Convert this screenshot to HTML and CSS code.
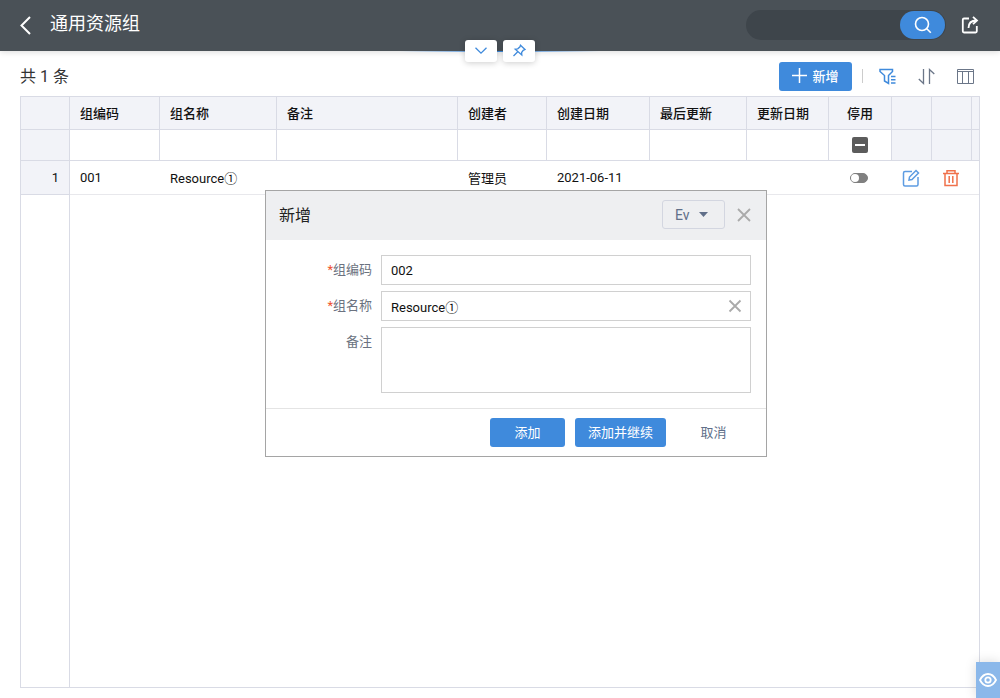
FILE: index.html
```
<!DOCTYPE html>
<html lang="zh-CN">
<head>
    <meta charset="UTF-8">
    <meta name="viewport" content="width=device-width, initial-scale=1.0">
    <title>通用资源组</title>
    <link rel="stylesheet" href="styles.css">
</head>
<body>
    <header class="topbar">
        <button class="icon-button back" aria-label="返回">
            <svg width="12" height="20" viewBox="0 0 12 20"><path d="M11 2L2.500 10.500 11 19" fill="none" stroke="#fff" stroke-width="2"/></svg>
        </button>
        <h1>通用资源组</h1>
        <form class="search">
            <input type="text" aria-label="搜索">
            <button type="button" aria-label="搜索">
                <svg width="18" height="18" viewBox="0 0 18 18" fill="none" stroke="#fff" stroke-width="1.6"><circle cx="8" cy="8" r="6.5"/><path d="M12.8 12.8l4 4"/></svg>
            </button>
        </form>
        <button class="icon-button share" aria-label="分享">
            <svg width="18" height="18" viewBox="0 0 18 18" fill="none" stroke="#fff" stroke-width="1.8"><path d="M8 2.500H3q-1.200 0-1.200 1.200v11.600q0 1.200 1.200 1.200h11.600q1.200 0 1.200-1.200V10"/><path d="M7.500 12c0-5 3-7.500 8-7.500M12 .8l4 3.700-4 3.700"/></svg>
        </button>
        <div class="tabs">
            <button aria-label="展开">
                <svg width="14" height="14" viewBox="0 0 14 14"><path d="M1.500 3.700L7 9.200l5.500-5.500" fill="none" stroke="#3f8adc" stroke-width="1.300"/></svg>
            </button>
            <button aria-label="固定">
                <svg width="14" height="14" viewBox="0 0 14 14" fill="none" stroke="#3f8adc" stroke-width="1.300"><path d="M8.500 1.200l4.500 4.300-1.800.8-1.600 2.200.2 2.500L3.200 5.200l2.500-.4L8 2.800zM5.500 8L1.500 12"/></svg>
            </button>
        </div>
    </header>

    <main class="page">
        <div class="toolbar">
            <span class="count">共 1 条</span>
            <button class="button add">
                <svg width="15" height="15" viewBox="0 0 15 15"><path d="M7.500 0v15M0 7.500h15" stroke="#fff" stroke-width="1.500"/></svg>
                新增
            </button>
            <span class="divider"></span>
            <button class="icon-button" aria-label="筛选">
                <svg width="17" height="17" viewBox="0 0 17 17" fill="none" stroke="#3f8adc" stroke-width="1.500"><path d="M1 1.500h12.500v2L9.500 7.500v8l-4-2.500V7.500L1 3.500z"/><path d="M12 8.500h4.500M12 11.700h4.500M12 15h4.500"/></svg>
            </button>
            <button class="icon-button" aria-label="排序">
                <svg width="17" height="17" viewBox="0 0 17 17" fill="none" stroke="#6b7688" stroke-width="1.300"><path d="M5.500 1v14.500L.8 11M11.500 16V1.500L16.300 6"/></svg>
            </button>
            <button class="icon-button" aria-label="列设置">
                <svg width="17" height="17" viewBox="0 0 17 17" fill="none" stroke="#6b7688"><path d="M.5 1.500h16v14H.5zM.5 3.500h16M5.500 3.500v12M11.500 3.500v12"/></svg>
            </button>
        </div>

        <div class="grid">
            <table>
                <colgroup>
                    <col class="c-index"><col class="c-code"><col class="c-name"><col>
                    <col class="c-creator"><col class="c-created"><col class="c-updater"><col class="c-updated">
                    <col class="c-disabled"><col class="c-action"><col class="c-action"><col class="c-scroll">
                </colgroup>
                <thead>
                    <tr class="titles">
                        <th></th>
                        <th>组编码</th>
                        <th>组名称</th>
                        <th>备注</th>
                        <th>创建者</th>
                        <th>创建日期</th>
                        <th>最后更新</th>
                        <th>更新日期</th>
                        <th class="center">停用</th>
                        <th></th>
                        <th></th>
                        <th></th>
                    </tr>
                    <tr class="filters">
                        <td class="shade"></td>
                        <td></td>
                        <td></td>
                        <td></td>
                        <td></td>
                        <td></td>
                        <td></td>
                        <td></td>
                        <td class="center"><input type="checkbox" class="tri-state" aria-label="停用筛选"></td>
                        <td class="shade"></td>
                        <td class="shade"></td>
                        <td class="shade"></td>
                    </tr>
                </thead>
                <tbody>
                    <tr>
                        <td class="shade index">1</td>
                        <td>001</td>
                        <td>Resource①</td>
                        <td></td>
                        <td>管理员</td>
                        <td>2021-06-11</td>
                        <td></td>
                        <td></td>
                        <td class="center"><input type="checkbox" class="switch" aria-label="停用"></td>
                        <td class="center">
                            <button class="icon-button" aria-label="编辑">
                                <svg width="18" height="18" viewBox="0 0 18 18" fill="none" stroke="#5d9ce2" stroke-width="1.500"><path d="M10 2.500H3q-1.500 0-1.500 1.500v11.500q0 1.500 1.500 1.500h11.500q1.500 0 1.500-1.500V8"/><path d="M7 11l.5-3L14 1.500l2.500 2.500L10 10.500z"/></svg>
                            </button>
                        </td>
                        <td class="center">
                            <button class="icon-button" aria-label="删除">
                                <svg width="18" height="18" viewBox="0 0 18 18" fill="none" stroke="#f0714b" stroke-width="1.500"><path d="M1 4.500h16M5 4.500V1.700h8v2.800M3 4.500v12h12v-12M7.200 7v7M10.800 7v7"/></svg>
                            </button>
                        </td>
                        <td></td>
                    </tr>
                </tbody>
            </table>
            <div class="grid-rest"></div>
        </div>
    </main>

    <form class="dialog" role="dialog" aria-labelledby="dialog-title">
        <div class="dialog-header">
            <h2 id="dialog-title">新增</h2>
            <div class="select">
                <select aria-label="Ev"><option>Ev</option></select>
                <svg width="9" height="5" viewBox="0 0 9 5"><path d="M0 0h9L4.500 5z" fill="#606f89"/></svg>
            </div>
            <button type="button" class="icon-button" aria-label="关闭">
                <svg width="14" height="14" viewBox="0 0 14 14"><path d="M1 1l12 12M13 1L1 13" stroke="#aaa" stroke-width="1.800"/></svg>
            </button>
        </div>
        <div class="dialog-body">
            <label for="code"><span class="required">*</span>组编码</label>
            <div class="field"><input type="text" id="code" value="002"></div>
            <label for="name"><span class="required">*</span>组名称</label>
            <div class="field">
                <input type="text" id="name" value="Resource①">
                <button type="button" class="icon-button" aria-label="清除">
                    <svg width="14" height="14" viewBox="0 0 14 14"><path d="M1.500 1.500l11 11M12.500 1.500l-11 11" stroke="#aaa" stroke-width="1.800"/></svg>
                </button>
            </div>
            <label for="remark">备注</label>
            <div class="field"><textarea id="remark"></textarea></div>
        </div>
        <div class="dialog-footer">
            <button type="button" class="button">添加</button>
            <button type="button" class="button wide">添加并继续</button>
            <button type="button" class="button plain">取消</button>
        </div>
    </form>

    <button class="watch" aria-label="查看">
        <svg width="18" height="14" viewBox="0 0 18 14" fill="none" stroke="#fff" stroke-width="1.800"><path d="M1 7q3-6 8-6t8 6q-3 6-8 6T1 7z"/><circle cx="9" cy="7" r="2.700"/></svg>
    </button>

    <script>
        document.querySelector('.tri-state').indeterminate = true;
    </script>
</body>
</html>
```
FILE: styles.css
```
* {
    box-sizing: border-box;
}
body {
    margin: 0;
    height: 100vh;
    display: flex;
    flex-direction: column;
    background: #fff;
    color: #111;
    font-family: Roboto, "Noto Sans CJK SC", sans-serif;
    font-size: 13px;
}
h1, h2 {
    margin: 0;
    font-weight: 400;
}
button, input, select, textarea {
    margin: 0;
    padding: 0;
    border: none;
    background: none;
    font: inherit;
    color: inherit;
}
button {
    cursor: pointer;
}
svg {
    display: block;
    flex: none;
}
.icon-button {
    display: inline-block;
    vertical-align: middle;
}

/* top bar */
.topbar {
    position: relative;
    display: flex;
    align-items: center;
    height: 51px;
    padding: 0 21px 1px 19px;
    background: #4a5157;
    box-shadow: 0 1px 6px rgba(0, 0, 0, 0.15);
}
.topbar::after {
    content: "";
    position: absolute;
    left: 40%;
    right: 40%;
    top: 100%;
    height: 1px;
    background: linear-gradient(to right, transparent, #3f8adc, transparent);
}
.topbar h1 {
    margin-left: 19px;
    padding-bottom: 2px;
    color: #fff;
    font-size: 18px;
    line-height: 24px;
}
.search {
    display: flex;
    width: 200px;
    height: 30px;
    margin-left: auto;
    padding: 1px;
    border-radius: 15px;
    background: #3e454b;
}
.search input {
    flex: 1;
    min-width: 0;
    padding-left: 14px;
    color: #fff;
    outline: none;
}
.search button {
    display: flex;
    align-items: center;
    justify-content: center;
    width: 45px;
    border-radius: 14px;
    background: #3f8adc;
}
.share {
    margin-left: 15px;
}
.tabs {
    position: absolute;
    left: 50%;
    bottom: -11px;
    z-index: 1;
    display: flex;
    gap: 6px;
    transform: translateX(-50%);
}
.tabs button {
    display: flex;
    align-items: center;
    justify-content: center;
    width: 32px;
    height: 22px;
    border-radius: 3px;
    background: #fff;
    box-shadow: 0 1px 6px rgba(0, 0, 0, 0.2);
}

/* list page */
.page {
    flex: 1;
    display: flex;
    flex-direction: column;
    padding: 0 20px 10px;
}
.toolbar {
    display: flex;
    align-items: center;
    height: 45px;
    padding: 5px 6px 0 0;
}
.toolbar .icon-button {
    margin-left: 22px;
}
.toolbar .divider + .icon-button {
    margin-left: 16px;
}
.count {
    margin-right: auto;
    padding-bottom: 3px;
    color: #333;
    font-size: 16px;
}
.divider {
    width: 1px;
    height: 14px;
    margin-left: 10px;
    background: #ccc;
}
.button {
    display: flex;
    align-items: center;
    justify-content: center;
    min-width: 75px;
    height: 29px;
    padding-bottom: 2px;
    border-radius: 3px;
    background: #3f8adc;
    color: #fff;
}
.add {
    gap: 5px;
    min-width: 73px;
    font-weight: 500;
}

.grid {
    flex: 1;
    display: flex;
    flex-direction: column;
    border: 1px solid #d9dbe5;
}
table {
    width: 100%;
    table-layout: fixed;
    border-collapse: separate;
    border-spacing: 0;
}
.c-index { width: 49px; }
.c-code { width: 90px; }
.c-name { width: 117px; }
.c-creator { width: 89px; }
.c-created { width: 103px; }
.c-updater { width: 97px; }
.c-updated { width: 82px; }
.c-disabled { width: 63px; }
.c-action { width: 40px; }
.c-scroll { width: 7px; }
th, td {
    height: 34px;
    padding: 0 0 0 10px;
    border-bottom: 1px solid #e8e8ec;
    text-align: left;
    white-space: nowrap;
}
thead th, thead td, .shade {
    border-right: 1px solid #d9dbe5;
    border-bottom-color: #d9dbe5;
}
thead tr > :last-child {
    border-right: none;
}
th, .shade {
    background: #f2f3f8;
}
th {
    font-weight: 500;
}
td:last-child, th:last-child, .center {
    padding: 0;
}
.titles th {
    height: 33px;
    padding-bottom: 2px;
}
.filters td {
    height: 31px;
}
.center {
    text-align: center;
}
tbody .center {
    padding-right: 3px;
}
.index {
    padding: 0 10px 0 0;
    text-align: right;
}
.grid-rest {
    flex: 1;
    width: 49px;
    border-right: 1px solid #d9dbe5;
}
.tri-state, .switch {
    appearance: none;
    display: block;
    margin: 0 auto;
}
.tri-state {
    width: 16px;
    height: 16px;
    border-radius: 2px;
    background: #5c5c5c;
}
.tri-state:indeterminate {
    background: linear-gradient(#fff, #fff) center / 10px 2px no-repeat #5c5c5c;
}
.switch {
    width: 18px;
    height: 10px;
    border: 1px solid #808080;
    border-radius: 5px;
    background: #808080;
}
.switch::before {
    content: "";
    display: block;
    width: 8px;
    height: 8px;
    border-radius: 50%;
    background: #fff;
}

/* dialog */
.dialog {
    position: absolute;
    left: 265px;
    top: 190px;
    width: 502px;
    border: 1px solid #a5a5a5;
    background: #fff;
}
.dialog-header {
    display: flex;
    align-items: center;
    height: 49px;
    padding: 0 15px 2px 13px;
    background: #eeeff1;
}
.dialog-header h2 {
    margin-right: auto;
    padding-bottom: 2px;
    color: #222;
    font-size: 16px;
}
.select {
    display: flex;
    align-items: center;
    width: 63px;
    height: 29px;
    margin-right: 12px;
    border: 1px solid #d3d6e0;
    border-radius: 3px;
    color: #606f89;
}
.select select {
    appearance: none;
    width: 36px;
    padding-left: 12px;
    font-size: 14px;
}
.dialog-body {
    display: grid;
    grid-template-columns: 91px 1fr;
    gap: 6px 9px;
    padding: 15px;
}
.dialog-body label {
    color: #6b7280;
    line-height: 30px;
    text-align: right;
}
.required {
    color: #f0532d;
}
.field {
    display: flex;
    align-items: center;
    min-height: 30px;
    padding: 0 8px 0 9px;
    border: 1px solid #d0d0d0;
}
.field input, .field textarea {
    flex: 1;
    min-width: 0;
    outline: none;
}
.field textarea {
    height: 64px;
    resize: none;
}
.dialog-footer {
    display: flex;
    justify-content: flex-end;
    gap: 10px;
    padding: 9px 15px;
    border-top: 1px solid #e4e4e4;
}
.wide {
    min-width: 91px;
}
.plain {
    background: none;
    color: #606f89;
}

.watch {
    position: fixed;
    right: 0;
    bottom: 0;
    display: flex;
    align-items: center;
    justify-content: center;
    width: 24px;
    height: 36px;
    background: #8bb8ea;
    box-shadow: 0 0 12px rgba(0, 0, 0, 0.15);
}
```
